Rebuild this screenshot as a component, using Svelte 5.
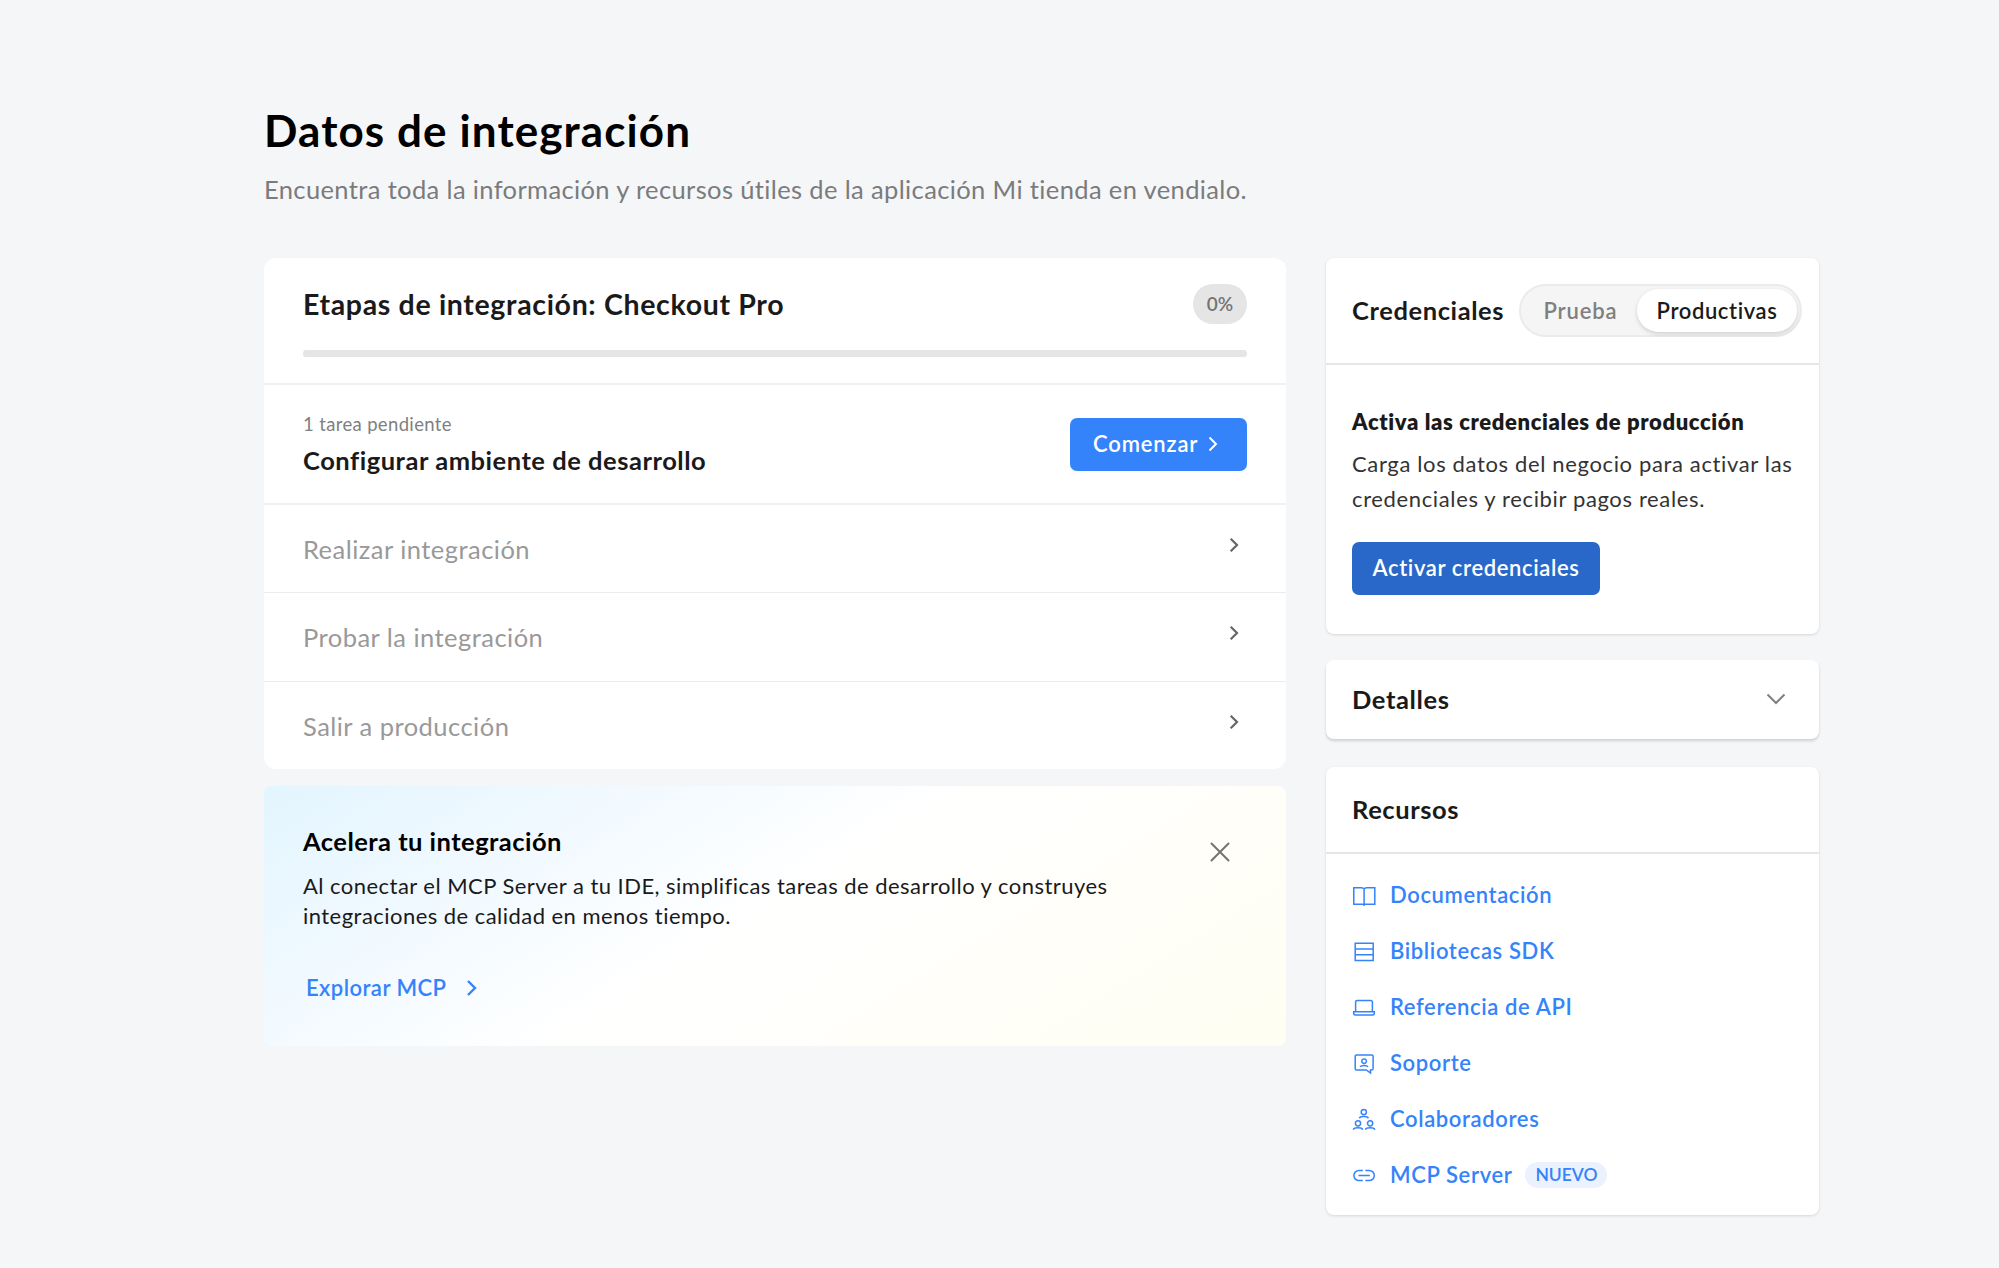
<script>
  const steps = [
    'Realizar integración',
    'Probar la integración',
    'Salir a producción'
  ]

  const resources = [
    { name: 'Documentación', icon: 'book' },
    { name: 'Bibliotecas SDK', icon: 'shelf' },
    { name: 'Referencia de API', icon: 'laptop' },
    { name: 'Soporte', icon: 'support' },
    { name: 'Colaboradores', icon: 'team' },
    { name: 'MCP Server', icon: 'link', tag: 'NUEVO' }
  ]

  const icons = {
    book: 'M1.8 4.7h7.6c1.4 0 2.4.5 2.7 1.3.3-.8 1.3-1.3 2.7-1.3h8v16.5h-21zM12.1 6v17',
    shelf: 'M3.2 4.2h18v17.4h-18zM3.2 10h18M3.2 15.8h18',
    laptop: 'M3.6 16.8V7a1.5 1.5 0 0 1 1.5-1.5h13.8A1.5 1.5 0 0 1 20.4 7v9.8M1.7 16.8h20.6v1.7a1.5 1.5 0 0 1-1.5 1.5H3.2a1.5 1.5 0 0 1-1.5-1.5z',
    support: 'M4.5 4h15.3a1.3 1.3 0 0 1 1.3 1.3v12.4a1.3 1.3 0 0 1-1.3 1.3h-1.3v3l-4.2-3H4.5a1.3 1.3 0 0 1-1.3-1.3V5.3A1.3 1.3 0 0 1 4.5 4zM14.4 10.2a2.3 2.3 0 1 1-4.6 0 2.3 2.3 0 1 1 4.6 0M8.1 15.8c.8-1 2.2-1.3 4-1.3s3.2.3 4 1.3',
    team: 'M14.4 5a2.6 2.6 0 1 1-5.2 0 2.6 2.6 0 1 1 5.2 0M7.3 11.2c.4-1.3 1.8-1.8 4.5-1.8s4.2.5 4.6 1.8M8.6 16.3a2.6 2.6 0 1 1-5.2 0 2.6 2.6 0 1 1 5.2 0M1.3 22.7c.4-1.3 1.9-1.9 4.7-1.9s4.3.6 4.7 1.9M20.7 16.3a2.6 2.6 0 1 1-5.2 0 2.6 2.6 0 1 1 5.2 0M13.4 22.7c.4-1.3 1.9-1.9 4.7-1.9s4.3.6 4.7 1.9',
    link: 'M10.8 7.4H7a5.1 5.1 0 0 0 0 10.2h3.8M13.4 7.4h3.8a5.1 5.1 0 0 1 0 10.2h-3.8M6.5 12.5h11.3'
  }

  const progress = 0
  let mode = $state('Productivas')
</script>

<main class="page">
  <h1 class="title">Datos de integración</h1>
  <p class="subtitle">Encuentra toda la información y recursos útiles de la aplicación Mi tienda en vendialo.</p>

  <div class="columns">
    <div class="left">
      <section class="steps">
        <header class="steps-head">
          <div class="steps-row">
            <h2 class="steps-title">Etapas de integración: Checkout Pro</h2>
            <span class="badge">{progress}%</span>
          </div>
          <div class="track">
            <div class="bar" style="width: {progress}%"></div>
          </div>
        </header>

        <div class="current">
          <div>
            <p class="pending">1 tarea pendiente</p>
            <h3 class="current-title">Configurar ambiente de desarrollo</h3>
          </div>
          <button class="button start">
            <span>Comenzar</span>
            <svg width="10" height="16" viewBox="0 0 10 16"><path d="M1.5 1.5L8 8l-6.5 6.5" /></svg>
          </button>
        </div>

        {#each steps as step}
          <div class="step">
            <span>{step}</span>
            <svg width="10" height="16" viewBox="0 0 10 16"><path d="M1.7 1.7L8 8l-6.3 6.3" /></svg>
          </div>
        {/each}
      </section>

      <section class="banner">
        <div>
          <h3 class="banner-title">Acelera tu integración</h3>
          <p class="banner-text">Al conectar el MCP Server a tu IDE, simplificas tareas de desarrollo y construyes<br />integraciones de calidad en menos tiempo.</p>
          <a href="/" class="explore">
            <span>Explorar MCP</span>
            <svg width="12" height="18" viewBox="0 0 12 18"><path d="M2 2l7 7-7 7" /></svg>
          </a>
        </div>
        <button class="close" aria-label="Cerrar">
          <svg width="20" height="20" viewBox="0 0 20 20"><path d="M1.5 1.5l17 17M18.5 1.5l-17 17" /></svg>
        </button>
      </section>
    </div>

    <aside class="right">
      <section class="card">
        <header class="cred-head">
          <h2 class="card-title">Credenciales</h2>
          <div class="toggle">
            <button class="option test" class:active={mode === 'Prueba'} onclick={() => (mode = 'Prueba')}>Prueba</button>
            <button class="option prod" class:active={mode === 'Productivas'} onclick={() => (mode = 'Productivas')}>Productivas</button>
          </div>
        </header>
        <div class="cred-body">
          <h3 class="cred-heading">Activa las credenciales de producción</h3>
          <p class="cred-text">Carga los datos del negocio para activar las<br />credenciales y recibir pagos reales.</p>
          <button class="button activate"><span>Activar credenciales</span></button>
        </div>
      </section>

      <section class="card details">
        <h2 class="card-title">Detalles</h2>
        <svg width="20" height="12" viewBox="0 0 20 12"><path d="M1.5 1.5L10 10l8.5-8.5" /></svg>
      </section>

      <section class="card resources">
        <header class="res-head">
          <h2 class="card-title">Recursos</h2>
        </header>
        <ul class="links">
          {#each resources as item}
            <li class="item">
              <a href="/" class="link">
                <svg width="24" height="24" viewBox="0 0 24 24"><path d={icons[item.icon]} /></svg>
                <span>{item.name}</span>
              </a>
              {#if item.tag}
                <span class="tag">{item.tag}</span>
              {/if}
            </li>
          {/each}
        </ul>
      </section>
    </aside>
  </div>
</main>

<style>
  :global(body) {
    margin: 0;
    background-color: #f5f6f8;
  }

  h1, h2, h3, p, ul {
    margin: 0;
    padding: 0;
    font-weight: 400;
  }

  button {
    border: 0;
    padding: 0;
    background: none;
    font-family: inherit;
    cursor: pointer;
  }

  a {
    text-decoration: none;
  }

  svg {
    flex: none;
    fill: none;
    stroke: currentColor;
    overflow: visible;
  }

  .page {
    box-sizing: border-box;
    min-height: 1268px;
    padding: 104px 180px 0 264px;
    font-family: Lato, 'Liberation Sans', sans-serif;
    white-space: nowrap;
    color: #1a1a1a;
    background-color: #f5f6f8;
  }

  .title {
    font-size: 44px;
    line-height: 52px;
    font-weight: 700;
    letter-spacing: 1.1px;
    color: #000;
  }

  .subtitle {
    margin-top: 17px;
    font-size: 25.5px;
    line-height: 32px;
    letter-spacing: .37px;
    color: #7a7b7c;
  }

  .columns {
    display: grid;
    grid-template-columns: 1022px 493px;
    column-gap: 40px;
    align-items: start;
    margin-top: 53px;
  }

  .steps {
    border-radius: 12px;
    background-color: #fff;
  }

  .steps-head {
    padding: 26px 39px;
    border-bottom: 2px solid #f0f0f0;
  }

  .steps-row {
    display: flex;
    align-items: center;
    justify-content: space-between;
    height: 40px;
  }

  .steps-title {
    font-size: 28.5px;
    line-height: 38px;
    font-weight: 700;
    letter-spacing: .66px;
  }

  .badge {
    width: 54px;
    height: 40px;
    border-radius: 20px;
    font-size: 19px;
    line-height: 40px;
    font-weight: 600;
    text-align: center;
    color: #737373;
    background-color: #e5e5e5;
  }

  .track {
    height: 7px;
    margin-top: 26px;
    border-radius: 3px;
    background-color: #e5e5e5;
  }

  .bar {
    height: 100%;
    border-radius: 3px;
    background-color: #3483fa;
  }

  .current {
    display: flex;
    align-items: center;
    justify-content: space-between;
    height: 118px;
    padding: 0 39px;
    border-bottom: 2px solid #f0f0f0;
  }

  .pending {
    font-size: 18.5px;
    line-height: 24px;
    letter-spacing: .35px;
    color: #808080;
  }

  .current-title {
    margin-top: 7px;
    font-size: 25.5px;
    line-height: 34px;
    font-weight: 700;
    letter-spacing: .53px;
  }

  .button {
    display: flex;
    align-items: center;
    box-sizing: border-box;
    height: 53px;
    padding-bottom: 2px;
    border-radius: 7px;
    font-size: 22px;
    font-weight: 600;
    letter-spacing: .63px;
    color: #fff;
  }

  .start {
    width: 177px;
    gap: 10px;
    padding-left: 23px;
    letter-spacing: .85px;
    background-color: #3483fa;
  }

  .start svg {
    margin-top: 2px;
    stroke-width: 2;
  }

  .step {
    box-sizing: border-box;
    display: flex;
    align-items: flex-start;
    justify-content: space-between;
    height: 88.4px;
    padding: 27px 47px 0 39px;
    border-bottom: 1px solid #ececec;
    font-size: 25.5px;
    line-height: 34px;
    letter-spacing: .47px;
    color: #999;
  }

  .step:last-child {
    height: 87.2px;
    border-bottom: 0;
  }

  .step svg {
    margin-top: 5px;
    stroke-width: 2.2;
    color: #666;
  }

  .banner {
    box-sizing: border-box;
    display: flex;
    justify-content: space-between;
    height: 260px;
    margin-top: 17px;
    padding: 39px 56px 0 39px;
    border-radius: 8px;
    color: #000;
    background: linear-gradient(148deg, #e3f5fe 0%, #eef8ff 20%, #fff 48%, #fffef2 100%);
  }

  .banner-title {
    font-size: 25.5px;
    line-height: 32px;
    font-weight: 700;
    letter-spacing: .46px;
  }

  .banner-text {
    margin-top: 14px;
    font-size: 22px;
    line-height: 30px;
    letter-spacing: .46px;
    color: #1a1a1a;
  }

  .explore {
    display: flex;
    align-items: center;
    gap: 20px;
    margin: 43px 0 0 3px;
    font-size: 22px;
    line-height: 28px;
    font-weight: 600;
    letter-spacing: .45px;
    color: #3483fa;
  }

  .explore svg {
    stroke-width: 2.4;
  }

  .close {
    align-self: flex-start;
    height: 20px;
    margin-top: 17px;
    color: #737373;
  }

  .close svg {
    display: block;
    stroke-width: 2;
    stroke-linecap: round;
  }

  .card {
    border-radius: 8px;
    background-color: #fff;
    box-shadow: 0 1px 3px rgba(0, 0, 0, .13);
  }

  .card-title {
    margin-top: -2px;
    font-size: 25.5px;
    line-height: 34px;
    font-weight: 700;
    letter-spacing: .6px;
  }

  .cred-head {
    display: flex;
    align-items: center;
    justify-content: space-between;
    height: 105px;
    padding: 0 17px 0 26px;
    border-bottom: 2px solid #e5e5e5;
  }

  .toggle {
    box-sizing: border-box;
    display: flex;
    align-items: center;
    height: 53px;
    padding: 0 3px;
    border: 2px solid #ebebeb;
    border-radius: 27px;
    background-color: #f5f5f5;
  }

  .option {
    height: 43px;
    border-radius: 22px;
    font-size: 22px;
    font-weight: 600;
    letter-spacing: .6px;
    color: #808080;
  }

  .test {
    width: 113px;
    letter-spacing: .85px;
  }

  .prod {
    width: 160px;
  }

  .active {
    color: #1a1a1a;
    background-color: #fff;
    box-shadow: 0 2px 4px rgba(0, 0, 0, .15);
  }

  .cred-body {
    padding: 43px 26px 39px;
  }

  .cred-heading {
    font-size: 22px;
    line-height: 28px;
    font-weight: 800;
    letter-spacing: .62px;
  }

  .cred-text {
    margin-top: 11px;
    font-size: 22px;
    line-height: 34.5px;
    letter-spacing: .64px;
    color: #333;
  }

  .activate {
    justify-content: center;
    width: 248px;
    margin-top: 26px;
    background-color: #2968c8;
  }

  .details {
    display: flex;
    align-items: center;
    justify-content: space-between;
    height: 79px;
    margin-top: 26px;
    padding: 0 33px 0 26px;
    box-shadow: 0 2px 3px rgba(0, 0, 0, .16);
  }

  .details svg {
    margin-top: -1px;
    stroke-width: 2;
    color: #808080;
  }

  .resources {
    margin-top: 28px;
  }

  .res-head {
    display: flex;
    align-items: center;
    height: 85px;
    padding: 0 26px;
    border-bottom: 2px solid #e5e5e5;
  }

  .links {
    padding: 13px 26px 12px;
    list-style: none;
  }

  .item {
    display: flex;
    align-items: center;
    gap: 13px;
    height: 56px;
  }

  .link {
    display: flex;
    align-items: center;
    gap: 14px;
    font-size: 22px;
    line-height: 28px;
    font-weight: 600;
    letter-spacing: .62px;
    color: #3483fa;
  }

  .link svg {
    stroke-width: 1.5;
  }

  .tag {
    width: 82px;
    height: 26px;
    border-radius: 13px;
    font-size: 17.5px;
    line-height: 26px;
    font-weight: 600;
    text-align: center;
    color: #3483fa;
    background-color: #ebf2fe;
  }
</style>
